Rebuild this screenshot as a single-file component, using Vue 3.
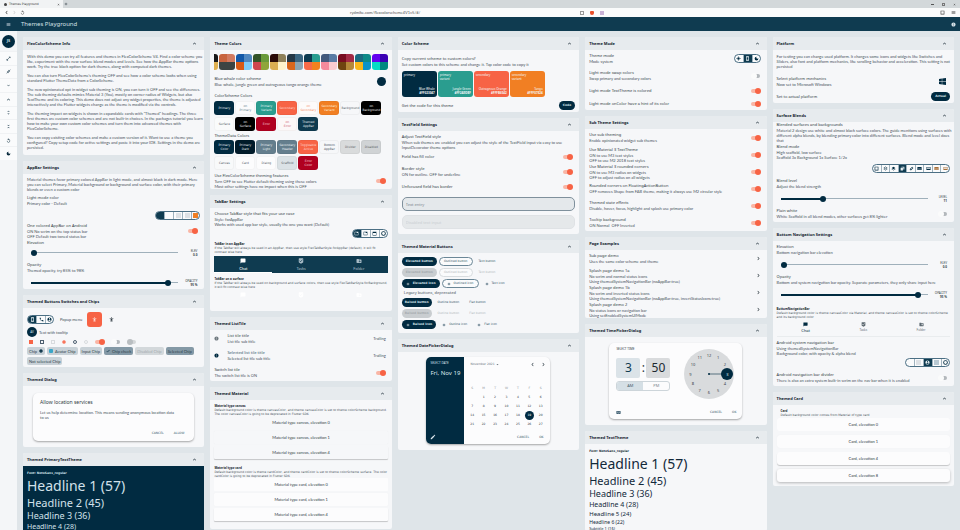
<script setup>
import { h } from 'vue'

const icons = {
  menu: 'M3 18h18v-2H3v2zm0-5h18v-2H3v2zm0-7v2h18V6H3z',
  less: 'M12 7l-8 8 2 2 6-6 6 6 2-2z',
  more: 'M16.59 8.59L12 13.17 7.41 8.59 6 10l6 6 6-6z',
  right: 'M9 4L7 6l6 6-6 6 2 2 8-8z',
  left: 'M15 4l2 2-6 6 6 6-2 2-8-8z',
  down: 'M7 10l5 5 5-5z',
  full: 'M21 11V3h-8l3.29 3.29-10 10L3 13v8h8l-3.29-3.29 10-10z',
  shrink: 'M22 3.41L16.71 8.7 20 12h-8V4l3.29 3.29L20.59 2 22 3.41zM3.41 22l5.29-5.29L12 20v-8H4l3.29 3.29L2 20.59 3.41 22z',
  unfoldMore: 'M12 5.83L15.17 9l1.41-1.41L12 3 7.41 7.59 8.83 9 12 5.83zm0 12.34L8.83 15l-1.41 1.41L12 21l4.59-4.59L15.17 15 12 18.17z',
  unfoldLess: 'M7.41 18.59L8.83 20 12 16.83 15.17 20l1.41-1.41L12 14l-4.59 4.59zm9.18-13.18L15.17 4 12 7.17 8.83 4 7.41 5.41 12 10l4.59-4.59z',
  replay: 'M12 5V1L7 6l5 5V7c3.31 0 6 2.69 6 6s-2.69 6-6 6-6-2.69-6-6H4c0 4.42 3.58 8 8 8s8-3.58 8-8-3.58-8-8-8z',
  moon: 'M12 3a9 9 0 1 0 9 9c0-.46-.04-.92-.1-1.36a5.389 5.389 0 0 1-4.4 2.26 5.403 5.403 0 0 1-3.14-9.8c-.44-.06-.9-.1-1.36-.1z',
  sun: 'M12 6a6 6 0 1 0 0 12 6 6 0 0 0 0-12zM11 1h2v4h-2zM11 19h2v4h-2zM1 11h4v2H1zM19 11h4v2h-4z',
  phoneDevice: 'M17 1H7c-1.100 0-2 .9-2 2v18c0 1.100.9 2 2 2h10c1.100 0 2-.9 2-2V3c0-1.100-.9-2-2-2zm-1 17H8V6h8v12z',
  chat: 'M20 2H4c-1.1 0-2 .9-2 2v18l4-4h14c1.1 0 2-.9 2-2V4c0-1.1-.9-2-2-2z',
  tasks: 'M19 1H5c-1.1 0-1.99.9-1.99 2L3 15.93c0 .69.35 1.3.88 1.66L12 23l8.11-5.41c.53-.36.88-.97.88-1.66L21 3c0-1.1-.9-2-2-2zm-9 15l-5-5 1.41-1.41L10 13.17l7.59-7.59L19 7l-9 9z',
  folder: 'M20 6h-8l-2-2H4c-1.11 0-1.99.89-1.99 2L2 18c0 1.11.89 2 2 2h16c1.11 0 2-.89 2-2V8c0-1.11-.89-2-2-2zm-1 8h-3v3h-2v-3h-3v-2h3V9h2v3h3v2z',
  phone: 'M6.62 10.79c1.44 2.83 3.76 5.14 6.59 6.59l2.2-2.2c.27-.27.67-.36 1.02-.24 1.12.37 2.33.57 3.57.57.55 0 1 .45 1 1V20c0 .55-.45 1-1 1-9.39 0-17-7.61-17-17 0-.55.45-1 1-1h3.5c.55 0 1 .45 1 1 0 1.25.2 2.45.57 3.57.11.35.03.74-.25 1.02l-2.2 2.2z',
  account: 'M12 2C6.48 2 2 6.48 2 12s4.48 10 10 10 10-4.48 10-10S17.52 2 12 2zm0 3c1.66 0 3 1.34 3 3s-1.34 3-3 3-3-1.34-3-3 1.34-3 3-3zm0 14.2c-2.5 0-4.71-1.28-6-3.22.03-1.99 4-3.08 6-3.08 1.99 0 5.97 1.09 6 3.08-1.29 1.94-3.5 3.22-6 3.22z',
  access: 'M12 1c1.400 0 2.500 1.100 2.500 2.500S13.400 6 12 6 9.500 4.900 9.500 3.500 10.600 1 12 1zm9 9h-5v13h-3v-6h-2v6H8V10H3V7h18v3z',
  edit: 'M3 17.25V21h3.75L17.81 9.94l-3.75-3.75L3 17.25zM20.71 7.04c.39-.39.39-1.02 0-1.41l-2.34-2.34c-.39-.39-1.02-.39-1.41 0l-1.83 1.83 3.75 3.75 1.83-1.83z',
  keyboard: 'M20 5H4c-1.1 0-1.99.9-1.99 2L2 17c0 1.1.9 2 2 2h16c1.1 0 2-.9 2-2V7c0-1.1-.9-2-2-2zm-9 3h2v2h-2V8zm0 3h2v2h-2v-2zM8 8h2v2H8V8zm0 3h2v2H8v-2zm-1 2H5v-2h2v2zm0-3H5V8h2v2zm9 7H8v-2h8v2zm0-4h-2v-2h2v2zm0-3h-2V8h2v2zm3 3h-2v-2h2v2zm0-3h-2V8h2v2z',
  info: 'M12 2C6.48 2 2 6.48 2 12s4.48 10 10 10 10-4.48 10-10S17.52 2 12 2zm1 15h-2v-6h2v6zm0-8h-2V7h2v2z',
  windows: 'M0 3.4 9.8 2v9.5H0zM11 1.9 24 0v11.4H11zM0 12.6h9.8V22L0 20.6zM11 12.6h13V24l-13-1.9z',
  add: 'M20 13.500h-6.500V20h-3v-6.500H4v-3h6.500V4h3v6.500H20z',
  check: 'M9 16.17L4.83 12l-2 2L9 20 22 7l-2-2z',
  close: 'M19 6.41L17.59 5 12 10.59 6.41 5 5 6.41 10.59 12 5 17.59 6.41 19 12 13.41 17.59 19 19 17.59 13.41 12z',
  square: 'M3 3h18v18H3zM6 6v12h12V6z',
  ring: 'M12 1a11 11 0 1 0 0 22 11 11 0 0 0 0-22zm0 4a7 7 0 1 1 0 14 7 7 0 0 1 0-14z',
  layers: 'M12 3 3 9l9 6 9-6zM3 13l9 6 9-6v3l-9 6-9-6z',
  layersOut: 'M12 2 2 9l10 7 10-7zm0 3 6 4-6 4-6-4zM2 14l10 7 10-7h-3l-7 5-7-5z',
  stack: 'M3 8h11v13H3zM7 3h14v14h-5V6H7z',
  pill: 'M15 3l6 6L9 21l-6-6zm0 4-8 8 2 2 8-8z',
  bar: 'M2 5h20v14H2zM5 13v3h14v-3z',
  barBottom: 'M2 5h20v14H2zM4 7v6h16V7z',
  corner: 'M3 4h18v16H3zM5 10v8h14v-8h-6V6H5z',
  topbar: 'M3 3h18v18H3zM5 9v10h14V9z',
}
const Icon = (p) => h('svg', { viewBox: '0 0 24 24', 'aria-hidden': 'true' }, [h('path', { d: icons[p.name], fill: 'currentColor', 'fill-rule': 'evenodd' })])
Icon.props = ['name']

const rail = ['full', 'shrink', 'more', 'less', 'unfoldMore', 'unfoldLess', 'replay', 'moon']

const schemes = [
  ['#181818', '#181818', '#e0b050', '#e0b050'], ['#c8643f', '#d27a60', '#3c4443', '#3c4443'], ['#1358a8', '#5087c0', '#d95a16', '#7fcbf8'],
  ['#345429', '#6a9a3a', '#cf4550', '#8fa53a'], ['#2c0c08', '#90815a', '#dcae52', '#fff3cc'], ['#253846', '#3a6580', '#d8661c', '#8ba4b2'],
  ['#0d3a50', '#2a9d8f', '#f76a48', '#f3821f'], ['#43597c', '#5a7ba4', '#f48a9c', '#fbcbd0'], ['#780d20', '#a32a45', '#6f4410', '#b5883a'],
  ['#1c6a80', '#108a88', '#f8b71a', '#0c93c8'], ['#6200ee', '#3a00b3', '#06dac5', '#01887f'],
]
const schemeColors = [
  ['Primary', '#012b41', '#e6edf2'], ['on\nPrimary', '#fbfbfc', '#5d7c8c'], ['Primary\nVariant', '#2a9d8f', '#e6f6f4'], ['Secondary', '#f76345', '#ffd5cb'],
  ['on\nSecondary', '#fdfbfa', '#f4906f'], ['Secondary\nVariant', '#f17f23', '#fff0dc'], ['Background', '#f6f7f9', '#566069'], ['on\nBackground', '#000', '#eee'],
  ['Surface', '#fafbfb', '#566069'], ['on\nSurface', '#000', '#eee'], ['Error', '#b00020', '#f4d3d8'], ['on\nError', '#fcf8f8', '#cf6474'], ['Themed\nAppBar', '#0f3b50', '#e6edf2'],
]
const dataColors = [
  ['Primary\nColor', '#012b41', '#e6edf2'], ['Primary\nDark', '#011b2a', '#e6edf2'], ['Primary\nLight', '#647e8d', '#edf2f4'], ['Secondary\nHeader', '#647e8d', '#edf2f4'],
  ['Toggleable\nActive', '#f76345', '#ffd5cb'], ['Bottom\nAppBar', '#f6f7f9', '#46525c'], ['Divider', '#d9dbdc', '#5c6468'], ['Disabled', '#d0d3d5', '#5c6468'],
  ['Canvas', '#f8f9fa', '#566069'], ['Card', '#fcfcfd', '#566069'], ['Dialog', '#fcfcfd', '#566069'], ['Scaffold', '#dbe2e6', '#566069'], ['Error\nColor', '#b00020', '#f4d3d8'],
]
const custom = [
  ['primary', 'Blue Whale', '#FF023047', '#012b41'], ['primary\nvariant', 'Jungle Green', '#FF2A9D8F', '#2a9d8f'],
  ['secondary', 'Outrageous Orange', '#FFFB6542', '#f76345'], ['secondary\nvariant', 'Tango', '#FFF07E24', '#f17f23'],
]
const fieldRows = [['Field has fill color', ''], ['Border style', 'ON for outline. OFF for underline'], ['Unfocused field has border', '']]
const modeRows = [['Light mode swap colors', 'Swap primary and secondary colors', false], ['Light mode TextTheme is colored', '', true], ['Light mode onColor have a hint of its color', '', true]]
const subRows = [
  ['Use sub theming', 'Enable opinionated widget sub themes'], ['Use Material 3 TextTheme', 'ON to use M3 text styles\nOFF to use M2 2018 text styles'],
  ['Use Material 3 rounded corners', 'ON to use M3 radius on widgets\nOFF to adjust radius on all widgets'],
  ['Rounded corners on FloatingActionButton', 'OFF removes Shape from FAB theme, making it always use M2 circular style'],
  ['Themed state effects', 'Disable, hover, focus, highlight and splash use primary color'], ['Tooltip background', 'ON Normal  OFF Inverted'],
]
const pages = [
  ['Sub page demo', 'Uses the same color scheme and theme'], ['Splash page demo 1a', 'No scrim and normal status icons\nUsing themedSystemNavigationBar (noAppBar:true)'],
  ['Splash page demo 1b', 'No scrim and inverted status icons\nUsing themedSystemNavigationBar (noAppBar:true, invertStatusIcons:true)'],
  ['Splash page demo 2', 'No status icons or navigation bar\nUsing setEnabledSystemUIMode'],
]
const heads = ['Headline 1 (57)', 'Headline 2 (45)', 'Headline 3 (36)', 'Headline 4 (28)', 'Headline 5 (24)', 'Headline 6 (22)', 'Subtitle 1 (16)']
const tabs = [['chat', 'Chat'], ['tasks', 'Tasks'], ['folder', 'Folder']]
const blends = ['square', 'layersOut', 'layers', 'stack', 'pill', 'bar', 'barBottom', 'bar', 'barBottom']
const days = [null, ...Array.from({ length: 27 }, (_, i) => i + 1)]
const hours = Array.from({ length: 12 }, (_, i) => {
  const a = ((i + 1) * Math.PI) / 6
  return { n: i + 1, x: 25 + 18.5 * Math.sin(a), y: 25 - 18.5 * Math.cos(a) }
})
</script>

<template>
  <div class="window">
    <div class="tabstrip">
      <div class="tab"><i class="fav"></i><span>Themes Playground</span><Icon name="close" /></div>
      <button class="newtab" aria-label="New tab"><Icon name="add" /></button>
      <span class="grow"></span>
      <span class="winctl"><i class="min"></i><i class="max"></i><Icon name="close" /></span>
    </div>
    <div class="toolbar">
      <Icon name="left" /><Icon class="dim" name="right" /><Icon name="replay" />
      <span class="address">rydmike.com/flexcolorscheme4V1v5/#/</span>
      <span class="ext"><i class="e1"></i><i class="e2"></i><i class="e3"></i></span>
      <span class="right-tools"><Icon name="square" /><Icon name="menu" /></span>
    </div>
    <header class="appbar">
      <button aria-label="Menu"><Icon name="menu" /></button>
      <h1>Themes Playground</h1>
      <button aria-label="About"><Icon name="info" /></button>
    </header>

    <div class="shell">
      <aside class="rail">
        <div class="avatar-wrap"><span class="logo">JS</span></div>
        <nav><button v-for="r in rail" :key="r" :aria-label="r"><Icon :name="r" /></button></nav>
      </aside>

      <main>
        <div class="col">
          <section class="card">
            <h2><button>FlexColorScheme Info<Icon name="less" /></button></h2>
            <div class="body prose">
              <p>With this demo you can try all features and themes in FlexColorScheme V4. Find a color scheme you<br>like, experiment with the new surface blend modes and levels. See how the AppBar theme options<br>work. Try the true black option for dark themes, along with computed dark themes.</p>
              <p>You can also turn FlexColorScheme's theming OFF and see how a color scheme looks when using<br>standard Flutter ThemeData from a ColorScheme.</p>
              <p>The new opinionated opt in widget sub theming is ON, you can turn it OFF and see the differences.<br>The sub theming defaults mimics Material 3 (You), mostly on corner radius of Widgets, but also<br>TextTheme and its coloring. This demo does not adjust any widget properties, the theme is adjusted<br>interactively and the Flutter  widgets change as the theme is modified via the controls.</p>
              <p>The theming impact on widgets is shown in expandable cards with "Themed" headings. The three<br>first themes are custom color schemes and are not built-in choices. In the packages tutorial you learn<br>how to make your own custom color schemes and turn them into advanced themes with<br>FlexColorScheme.</p>
              <p>You can copy existing color schemes and make a custom version of it. Want to use a theme you<br>configured? Copy setup code for active settings and paste it into your IDE. Settings in the demo are<br>persisted.</p>
            </div>
          </section>

          <section class="card">
            <h2><button>AppBar Settings<Icon name="less" /></button></h2>
            <div class="body">
              <p class="sub lead">Material themes favor primary colored AppBar in light mode, and almost black in dark mode. Here<br>you can select Primary, Material background or background and surface color, with their primary<br>blends or even a custom color</p>
              <div class="row"><div><b>Light mode color</b><p>Primary color - Default</p></div></div>
              <div class="segrow"><div class="seg"><button class="on" aria-label="Primary"></button><button aria-label="Material"></button><button class="s1" aria-label="Background"><i></i></button><button class="s1" aria-label="Surface"><i></i></button><button class="s2" aria-label="Custom"><i></i></button></div></div>
              <label class="row"><div><b>One colored AppBar on Android</b><p>ON  No scrim on the top status bar<br>OFF Default two toned status bar</p></div><input type="checkbox" class="switch" checked></label>
              <label class="solo" for="ab-el">Elevation</label>
              <div class="slider"><input id="ab-el" type="range" value="0" style="--v:0%"><output>ELEV<b>0.0</b></output></div>
              <label class="row" for="ab-op"><div><b>Opacity</b><p>Themed opacity, try 85% to 98%</p></div></label>
              <div class="slider"><input id="ab-op" type="range" value="95" style="--v:95%"><output>OPACITY<b>95 %</b></output></div>
            </div>
          </section>

          <section class="card">
            <h2><button>Themed Buttons Switches and Chips<Icon name="less" /></button></h2>
            <div class="body widgets">
              <div class="line l1"><div class="seg"><button class="on" aria-label="Device"><Icon name="phoneDevice" /></button><button aria-label="Phone"><Icon name="phone" /></button><button aria-label="Account"><Icon name="account" /></button></div><span class="sub popup">Popup menu</span><button class="fab" aria-label="Accessibility"><Icon name="access" /></button><Icon class="acc" name="access" /></div>
              <div class="line l2"><span class="av">AV</span><span class="sub">Text with tooltip</span></div>
              <div class="line l3">
                <input type="checkbox" class="cb" checked aria-label="Checked"><input type="checkbox" class="cb" aria-label="Unchecked"><input type="checkbox" class="cb" disabled aria-label="Disabled">
                <input type="radio" name="r" class="rb" checked aria-label="Selected"><input type="radio" name="r" class="rb" aria-label="Unselected"><input type="radio" class="rb" disabled aria-label="Disabled">
                <span class="switches"><input type="checkbox" class="switch" checked aria-label="On"><input type="checkbox" class="switch" aria-label="Off"><input type="checkbox" class="switch" disabled aria-label="Disabled"></span>
              </div>
              <div class="chips"><span>Chip<Icon name="info" /></span><span><i class="mini"></i>Avatar Chip</span><span>Input Chip</span><span class="sel"><Icon name="check" />Chip check</span><span class="dis">Disabled Chip</span><span class="sel">Selected Chip</span><span>Not selected Chip</span></div>
            </div>
          </section>

          <section class="card">
            <h2><button>Themed Dialog<Icon name="less" /></button></h2>
            <div class="body dialog-body">
              <div class="dialog"><h3>Allow location services</h3><p class="sub">Let us help determine location. This means sending anonymous location data<br>to us</p><div class="actions"><button>CANCEL</button><button>ALLOW</button></div></div>
            </div>
          </section>

          <section class="card">
            <h2><button>Themed PrimaryTextTheme<Icon name="less" /></button></h2>
            <div class="body type dark"><b>Font: NotoSans_regular</b><p v-for="(t, i) in heads.slice(0, 4)" :key="t" :class="'h' + (i + 1)">{{ t }}</p></div>
          </section>
        </div>

        <div class="col">
          <section class="card">
            <h2><button>Theme Colors<Icon name="less" /></button></h2>
            <div class="body colors">
              <div class="schemes"><button v-for="(s, i) in schemes" :key="i" :aria-label="'Scheme ' + (i + 1)"><i v-for="(c, j) in s" :key="j" :style="{ background: c }"></i></button></div>
              <div class="row"><div><b>Blue whale color scheme</b><p>Blue whale, jungle green and outrageous tango orange theme</p></div><i class="dot"></i></div>
              <h4>ColorScheme Colors</h4>
              <div class="boxes"><span v-for="c in schemeColors" :key="c[0]" :style="{ background: c[1], color: c[2] }">{{ c[0] }}</span></div>
              <h4>ThemeData Colors</h4>
              <div class="boxes"><span v-for="c in dataColors" :key="c[0]" :style="{ background: c[1], color: c[2] }">{{ c[0] }}</span></div>
              <label class="row"><div><b>Use FlexColorScheme theming features</b><p>Turn OFF to see Flutter default theming using these colors<br>Most other settings have no impact when this is OFF</p></div><input type="checkbox" class="switch" checked></label>
            </div>
          </section>

          <section class="card">
            <h2><button>TabBar Settings<Icon name="less" /></button></h2>
            <div class="body tabcard">
              <div class="row"><div><b>Choose TabBar style that fits your use case</b><p>Style: forAppBar<br>Works with used app bar style, usually the one you want (Default)</p></div></div>
              <div class="segrow"><div class="seg"><button class="on" aria-label="App bar"><Icon name="corner" /></button><button aria-label="Background"><Icon name="corner" /></button><button aria-label="Top"><Icon name="topbar" /></button><button aria-label="Universal"><Icon name="ring" /></button></div></div>
              <div class="note"><b>TabBar in an AppBar</b><p>If the TabBar will always be used in an AppBar, then use style FlexTabBarStyle.forAppBar (default), it will fit<br>contrast wise here</p></div>
              <div class="tabbar"><button v-for="t in tabs" :key="t[1]"><Icon :name="t[0]" />{{ t[1] }}</button></div>
              <div class="note"><b>TabBar on a surface</b><p>If the TabBar will always be used on background and surface colors, then use style FlexTabBarStyle.forBackground,<br>it will fit contrast wise here</p></div>
              <div class="tabbar ghost"><button v-for="t in tabs" :key="t[1]" :aria-label="t[1]"><Icon :name="t[0]" /></button></div>
            </div>
          </section>

          <section class="card">
            <h2><button>Themed ListTile<Icon name="less" /></button></h2>
            <div class="body tiles">
              <div class="row"><Icon class="gray" name="info" /><div><b>List tile title</b><p>List tile sub title</p></div><span class="sub">Trailing</span></div>
              <div class="row picked"><Icon name="info" /><div><b>Selected list tile title</b><p>Selected list tile sub title</p></div><span class="sub">Trailing</span></div>
              <label class="row"><div><b>Switch list tile</b><p>The switch list tile is ON</p></div><input type="checkbox" class="switch" checked></label>
            </div>
          </section>

          <section class="card">
            <h2><button>Themed Material<Icon name="less" /></button></h2>
            <div class="body material">
              <div class="note"><b>Material type canvas</b><p>Default background color is theme canvasColor, and theme canvasColor is set to theme colorScheme background.<br>The color canvasColor is going to be deprecated in Flutter SDK</p></div>
              <div class="sheets"><span>Material type canvas, elevation 0</span><span class="z1">Material type canvas, elevation 1</span><span class="z4">Material type canvas, elevation 4</span></div>
              <div class="note"><b>Material type card</b><p>Default background color is theme cardColor, and theme cardColor is set to theme colorScheme surface. The color<br>cardColor is going to be deprecated in Flutter SDK</p></div>
              <div class="sheets white"><span>Material type card, elevation 0</span><span class="z1">Material type card, elevation 1</span><span class="z4">Material type card, elevation 4</span></div>
            </div>
          </section>
        </div>

        <div class="col">
          <section class="card">
            <h2><button>Color Scheme<Icon name="less" /></button></h2>
            <div class="body scheme">
              <div class="row"><div><b>Copy current scheme to custom colors?</b><p>Set custom colors to this scheme and change it. Tap color code to copy it</p></div></div>
              <div class="customs"><button v-for="c in custom" :key="c[0]" :style="{ background: c[3] }"><span>{{ c[0] }}</span><span class="code">{{ c[1] }}<b>{{ c[2] }}</b></span></button></div>
              <div class="row single"><div><b>Get the code for this theme</b></div><button class="btn fill">Code</button></div>
            </div>
          </section>

          <section class="card">
            <h2><button>TextField Settings<Icon name="less" /></button></h2>
            <div class="body fields">
              <div class="intro"><b>Adjust TextField style</b><p>When sub themes are enabled you can adjust the style of the TextField input via easy to use<br>InputDecorator theme options</p></div>
              <label v-for="r in fieldRows" :key="r[0]" class="row" :class="{ single: !r[1] }"><div><b>{{ r[0] }}</b><p v-if="r[1]">{{ r[1] }}</p></div><input type="checkbox" class="switch" checked></label>
              <input class="text" placeholder="Text entry" aria-label="Text entry">
              <input class="text" placeholder="Disabled text input" aria-label="Disabled text input" disabled>
            </div>
          </section>

          <section class="card">
            <h2><button>Themed Material Buttons<Icon name="less" /></button></h2>
            <div class="body btns">
              <div><button class="btn fill">Elevated button</button><button class="btn out">Outlined button</button><button class="btn">Text button</button></div>
              <div><button class="btn fill" disabled>Elevated button</button><button class="btn out" disabled>Outlined button</button><button class="btn" disabled>Text button</button></div>
              <div><button class="btn fill"><Icon name="add" />Elevated icon</button><button class="btn out"><Icon name="add" />Outlined icon</button><button class="btn"><Icon name="add" />Text icon</button></div>
              <p>Legacy buttons, deprecated</p>
              <div><button class="btn fill tight">Raised button</button><button class="btn">Outline button</button><button class="btn">Flat button</button></div>
              <div><button class="btn fill tight" disabled>Raised button</button><button class="btn" disabled>Outline button</button><button class="btn" disabled>Flat button</button></div>
              <div><button class="btn fill"><Icon name="add" />Raised icon</button><button class="btn"><Icon name="add" />Outline icon</button><button class="btn"><Icon name="add" />Flat icon</button></div>
            </div>
          </section>

          <section class="card">
            <h2><button>Themed DatePickerDialog<Icon name="less" /></button></h2>
            <div class="body pick">
              <div class="datepicker">
                <div class="side"><span>SELECT DATE</span><strong>Fri, Nov 19</strong><Icon name="edit" /></div>
                <div class="cal">
                  <div class="calhead"><span>November 2021</span><Icon name="down" /><i class="grow"></i><button aria-label="Previous month"><Icon name="left" /></button><button aria-label="Next month"><Icon name="right" /></button></div>
                  <div class="grid"><span v-for="(d, i) in 'SMTWTFS'" :key="'w' + i" class="wd">{{ d }}</span><span v-for="(d, i) in days" :key="i" :class="{ today: d === 19 }">{{ d }}</span></div>
                  <div class="actions"><button>CANCEL</button><button>OK</button></div>
                </div>
              </div>
            </div>
          </section>
        </div>

        <div class="col">
          <section class="card">
            <h2><button>Theme Mode<Icon name="less" /></button></h2>
            <div class="body">
              <div class="row"><div><b>Theme mode</b><p>Mode system</p></div><div class="seg"><button aria-label="Light"><Icon name="sun" /></button><button class="on" aria-label="System"><Icon name="phoneDevice" /></button><button aria-label="Dark"><Icon name="moon" /></button></div></div>
              <label v-for="r in modeRows" :key="r[0]" class="row" :class="{ single: !r[1] }"><div><b>{{ r[0] }}</b><p v-if="r[1]">{{ r[1] }}</p></div><input type="checkbox" class="switch" :checked="r[2]"></label>
            </div>
          </section>

          <section class="card">
            <h2><button>Sub Theme Settings<Icon name="less" /></button></h2>
            <div class="body"><label v-for="r in subRows" :key="r[0]" class="row"><div><b>{{ r[0] }}</b><p>{{ r[1] }}</p></div><input type="checkbox" class="switch" checked></label></div>
          </section>

          <section class="card">
            <h2><button>Page Examples<Icon name="less" /></button></h2>
            <div class="body"><a v-for="r in pages" :key="r[0]" href="#" class="row"><div><b>{{ r[0] }}</b><p>{{ r[1] }}</p></div><Icon class="go" name="right" /></a></div>
          </section>

          <section class="card">
            <h2><button>Themed TimePickerDialog<Icon name="less" /></button></h2>
            <div class="body pick time">
              <div class="timepicker">
                <span class="cap">SELECT TIME</span>
                <div class="timemain">
                  <div class="digits">
                    <div class="hm"><span class="cur">3</span><i>:</i><span>50</span></div>
                    <div class="ampm"><button class="cur">AM</button><button>PM</button></div>
                  </div>
                  <svg class="clock" viewBox="0 0 50 50"><circle cx="25" cy="25" r="25" fill="#d9dbdd" /><path d="M25 25H43" stroke="#012b41" stroke-width=".6" /><circle cx="25" cy="25" r="1" fill="#012b41" /><circle cx="43" cy="25" r="6" fill="#012b41" /><text v-for="t in hours" :key="t.n" :x="t.x" :y="t.y + 1.5" :fill="t.n === 3 ? '#dfe8ee' : '#3a444c'" text-anchor="middle" font-size="4">{{ t.n }}</text></svg>
                </div>
                <div class="actions"><Icon name="keyboard" /><i class="grow"></i><button>CANCEL</button><button>OK</button></div>
              </div>
            </div>
          </section>

          <section class="card">
            <h2><button>Themed TextTheme<Icon name="less" /></button></h2>
            <div class="body type"><b>Font: NotoSans_regular</b><p v-for="(t, i) in heads" :key="t" :class="'h' + (i + 1)">{{ t }}</p></div>
          </section>
        </div>

        <div class="col">
          <section class="card">
            <h2><button>Platform<Icon name="less" /></button></h2>
            <div class="body platform">
              <p class="sub">For testing you can change used platform. It changes some icons and widgets like Switches and<br>Sliders, also font and platform mechanics, like scrolling behavior and acceleration. This setting is not<br>persisted</p>
              <div class="row"><div><b>Select platform mechanics</b><p>Now set to Microsoft Windows</p></div><Icon class="win" name="windows" /></div>
              <div class="row single"><div><b>Set to actual platform</b></div><button class="btn fill">Actual</button></div>
            </div>
          </section>

          <section class="card">
            <h2><button>Surface Blends<Icon name="less" /></button></h2>
            <div class="body blend">
              <b>Blended surfaces and backgrounds</b>
              <p class="sub">Material 2 design use white and almost black surface colors. The guide mentions using surfaces with<br>different alpha blends, by blending primary color into different surfaces. Blend mode and level does<br>that</p>
              <div class="row"><div><b>Blend mode</b><p>High scaffold, low surface<br>Scaffold 3x  Background 1x  Surface 1/2x</p></div></div>
              <div class="segrow"><div class="seg many"><button v-for="(b, i) in blends" :key="i" :class="{ on: i === 3, warm: i > 6 }" :aria-label="'Blend ' + (i + 1)"><Icon :name="b" /></button></div></div>
              <label class="row" for="bl"><div><b>Blend level</b><p>Adjust the blend strength</p></div></label>
              <div class="slider"><input id="bl" type="range" value="28" style="--v:28%"><output>LEVEL<b>11</b></output></div>
              <label class="row"><div><b>Plain white</b><p>White Scaffold in all blend modes, other surfaces get 8% lighter</p></div><input type="checkbox" class="switch"></label>
            </div>
          </section>

          <section class="card">
            <h2><button>Bottom Navigation Settings<Icon name="less" /></button></h2>
            <div class="body bottomnav">
              <label class="row" for="bn-el"><div><b>Elevation</b><p>Bottom navigation bar elevation</p></div></label>
              <div class="slider"><input id="bn-el" type="range" value="0" style="--v:0%"><output>ELEV<b>0.0</b></output></div>
              <label class="row" for="bn-op"><div><b>Opacity</b><p>Bottom and system navigation bar opacity. Separate parameters, they only share input here</p></div></label>
              <div class="slider"><input id="bn-op" type="range" value="95" style="--v:95%"><output>OPACITY<b>95 %</b></output></div>
              <div class="note"><b>BottomNavigationBar</b><p>Default background color is theme canvasColor via Material, and theme canvasColor is set to theme colorScheme<br>and its background color</p></div>
              <nav class="bnav"><button v-for="(t, i) in tabs" :key="t[1]" :class="{ cur: !i }"><Icon :name="t[0]" />{{ t[1] }}</button></nav>
              <div class="row"><div><b>Android system navigation bar</b><p>Using themedSystemNavigationBar<br>Background color, with opacity &amp; alpha blend</p></div></div>
              <div class="segrow"><div class="seg"><button aria-label="None"></button><button class="s1" aria-label="Surface"><i></i></button><button class="on" aria-label="Background"><Icon name="account" /></button><button class="s3" aria-label="Scaffold"><i></i></button><button aria-label="Transparent"><Icon name="ring" /></button></div></div>
              <label class="row"><div><b>Android navigation bar divider</b><p>There is also an extra system built-in scrim on the nav bar when it is enabled</p></div><input type="checkbox" class="switch"></label>
            </div>
          </section>

          <section class="card">
            <h2><button>Themed Card<Icon name="less" /></button></h2>
            <div class="body cards"><div class="note"><b>Card</b><p>Default background color comes from Material of type card</p></div><div class="sheets white"><span>Card, elevation 0</span><span class="z1">Card, elevation 1</span><span class="z4">Card, elevation 4</span><span class="z8">Card, elevation 8</span></div></div>
          </section>
        </div>
      </main>
    </div>
  </div>
</template>

<style>
body { margin: 0; overflow: hidden; }
</style>

<style scoped>
.window { --navy: #012b41; --small: 3px; --title: 4px; height: 100vh; display: flex; flex-direction: column; overflow: hidden; font: 4px/6px "Noto Sans", sans-serif; color: #2f3a42; background: #dfe5e9; }
.window * { box-sizing: border-box; }
h1, h2, h3, h4, p { margin: 0; font: inherit; }
button { font: inherit; color: inherit; background: none; border: 0; padding: 0; margin: 0; white-space: nowrap; }
a { color: inherit; text-decoration: none; }
b { font-weight: inherit; }
input { margin: 0; }
svg { width: 5px; height: 5px; display: block; flex: none; }
.grow { flex: 1; }

.tabstrip { height: 8px; flex: none; display: flex; align-items: center; background: #d3d8da; }
.tab { width: 63px; height: 8px; display: flex; align-items: center; gap: 2px; padding: 0 3px 0 4px; background: #f1f3f4; color: #333; }
.tab span { flex: 1; font: 3px/6px "DejaVu Sans", sans-serif; }
.tab svg { width: 3px; height: 3px; }
.fav { width: 3px; height: 3px; border-radius: 50%; background: #444; }
.newtab { margin-left: 1px; }
.newtab svg { width: 4px; height: 4px; }
.winctl { display: flex; align-items: center; gap: 8px; padding-right: 4px; color: #333; }
.winctl svg { width: 3px; height: 3px; }
.min { width: 3px; height: 1px; background: #555; }
.max { width: 3px; height: 3px; border: 1px solid #777; }
.toolbar { height: 9px; flex: none; display: flex; align-items: center; gap: 3px; padding: 0 4px; background: #fafbfb; color: #444; }
.toolbar .dim { opacity: .25; }
.address { margin-left: 322px; font: 4px/6px Lato, sans-serif; flex: 1; color: #555; }
.ext { display: flex; gap: 6px; align-items: center; margin-right: 333px; }
.ext i { width: 4px; height: 4px; }
.e1 { border: 1px solid #999; }
.e2 { background: #e8502b; border-radius: 1px 1px 2px 2px; }
.e3 { background: #c9b2d6; }
.right-tools { display: flex; gap: 6px; }
.appbar { height: 14px; flex: none; display: flex; align-items: center; background: #0f3b50; color: #d5e0e6; padding: 0 4px 0 6px; }
.appbar h1 { flex: 1; margin-left: 10px; font-size: 6px; line-height: 14px; }

.shell { flex: 1; min-height: 0; display: flex; }
.rail { width: 17px; flex: none; background: #f4f6f8; color: #0b2c3f; }
.avatar-wrap { height: 20px; display: grid; place-items: center; }
.logo { width: 13px; height: 13px; border-radius: 50%; background: var(--navy); color: #cfe0ea; display: grid; place-items: center; font-weight: bold; }
.rail nav { height: 109px; display: flex; flex-direction: column; background: #fafbfc; }
.rail nav button { flex: 1; display: grid; place-items: center; border-top: 1px solid #f0f2f4; }
main { flex: 1; min-width: 0; display: grid; grid-template-columns: repeat(5, minmax(0, 1fr)); gap: 6px; padding: 6px; overflow: hidden; align-items: start; }
.col { display: flex; flex-direction: column; gap: 6px; }
.card { background: #f6f7f9; border-radius: 2px; overflow: hidden; }
.card h2 button { width: 100%; height: 13px; display: flex; align-items: center; justify-content: space-between; padding: 0 7px 0 4px; background: #e7ebee; color: #14242f; font-size: var(--title); font-weight: bold; }
.body { padding: 0 4px; }
.body p, .sub { font: 4px/5px Lato, "Noto Sans", sans-serif; white-space: pre; color: #46525b; }
.row { min-height: 17px; display: flex; align-items: center; justify-content: space-between; padding-right: 2px; }
.row.single { min-height: 13px; }
.row b, .intro b, .blend > b { display: block; line-height: 6px; white-space: nowrap; }
.row > div { min-width: 0; }
.prose { padding: 4px 4px 5px; display: grid; gap: 4px; }
.lead { padding-top: 3px; }
.solo { display: block; line-height: 7px; }

.switch { appearance: none; flex: none; width: 10px; height: 6px; position: relative; }
.switch::before { content: ""; position: absolute; right: 1px; top: 1px; width: 7px; height: 4px; border-radius: 2px; background: #b3b8bc; }
.switch::after { content: ""; position: absolute; left: 0; top: 0; width: 6px; height: 6px; border-radius: 50%; background: #fafbfb; }
.switch:checked::before { right: 2px; width: 8px; background: #f9b6a6; }
.switch:checked::after { left: 4px; background: #f76345; }
.switch:disabled::before { background: #d4d7d9; }
.switch:disabled::after { background: #b9bec1; }
.segrow { height: 13px; display: flex; align-items: center; justify-content: flex-end; }
.seg { display: flex; height: 9px; border: 1px solid #4b6f84; border-radius: 5px; overflow: hidden; background: #fafbfc; color: var(--navy); }
.seg button { width: 9px; display: grid; place-items: center; }
.seg button:first-child, .seg button:last-child { width: 8px; }
.seg button + button { border-left: 1px solid #9fb2be; }
.seg .on { background: #0f3b50; color: #e8f0f4; }
.seg svg { width: 5px; height: 5px; }
.seg i { width: 5px; height: 5px; background: #dde1e5; }
.seg .s2 i { background: #f17f23; }
.seg .s3 i { background: #b8c8d2; }
.seg.many { width: 78px; }
.seg.many button { flex: 1; }
.warm { color: #a8703a; }
.slider { height: 13px; display: flex; align-items: center; gap: 3px; padding: 0 3px 0 4px; }
.slider input { appearance: none; flex: 1; min-width: 0; height: 6px; background: linear-gradient(var(--navy), var(--navy)) 0 50% / var(--v) 2px no-repeat, linear-gradient(#9fb0bb, #9fb0bb) 0 50% / 100% 1px no-repeat; }
.slider input::-webkit-slider-thumb { appearance: none; width: 6px; height: 6px; border-radius: 50%; background: var(--navy); }
.slider output { width: 16px; text-align: right; font-size: var(--small); line-height: 4px; }
.slider output b { display: block; font-weight: bold; }

.widgets { padding: 4px 4px 2px; }
.line { display: flex; align-items: center; }
.l1 { height: 15px; }
.popup { margin: 0 5px 0 6px; }
.fab { width: 15px; height: 15px; border-radius: 3px; background: #f76345; color: #ffe4dc; display: grid; place-items: center; }
.acc { margin-left: 7px; }
.l2 { height: 10px; gap: 2px; }
.av { width: 10px; height: 10px; border-radius: 50%; background: var(--navy); color: #cfe0ea; font-size: var(--small); display: grid; place-items: center; }
.l3 { height: 9px; gap: 7px; padding-left: 2px; }
.cb, .rb { appearance: none; width: 4px; height: 4px; border: 1px solid #4e5f70; }
.cb:checked { background: #f76345; border-color: #f76345; }
.rb { border-radius: 50%; }
.rb:checked { background: #f76345; border-color: #f9a090; }
.cb:disabled, .rb:disabled { border-color: #d8dbde; }
.switches { display: flex; gap: 6px; }
.chips { padding-top: 1px; display: flex; flex-wrap: wrap; gap: 2px; }
.chips span { height: 8px; display: flex; align-items: center; gap: 2px; padding: 0 2px; border-radius: 2px; background: #c8d1d7; color: #2d3e49; font: 4px Lato, sans-serif; white-space: nowrap; }
.chips .sel { background: #8499a6; }
.chips .dis { background: #d3d8db; color: #a3abb0; }
.chips svg { width: 4px; height: 4px; color: var(--navy); }
.mini { width: 4px; height: 4px; background: #3aa6c8; border-radius: 1px; }

.dialog-body { padding: 7px 10px 6px; }
.dialog { background: #fcfcfd; border-radius: 5px; box-shadow: 0 1px 2px #0005; padding: 6px 7px 3px; height: 48px; display: flex; flex-direction: column; }
.dialog h3 { font-size: 5px; margin-bottom: 5px; }
.actions { display: flex; align-items: center; justify-content: flex-end; gap: 10px; margin-top: auto; font: 3px/5px "DejaVu Sans", sans-serif; height: 9px; color: #34566a; }
.dialog .actions { padding-right: 3px; }

.type { color: #13293a; padding: 4px 4px 0; }
.type b { display: block; font: bold 3px/6px "DejaVu Sans", sans-serif; }
.type p { font-family: "Noto Sans", sans-serif; color: inherit; }
.type .h1 { font-size: 14px; line-height: 19px; }
.type .h2 { font-size: 11px; line-height: 15px; }
.type .h3 { font-size: 9px; line-height: 12px; }
.type .h4 { font-size: 7px; line-height: 10px; }
.type .h5 { font-size: 6px; line-height: 8px; }
.type .h6 { font-size: 5px; line-height: 8px; }
.type .h7 { font-size: 4px; line-height: 5px; }
.dark { background: var(--navy); color: #d2e1ea; }

.colors { padding-top: 4px; }
.schemes { display: flex; justify-content: flex-end; gap: 1px; overflow: hidden; margin-bottom: 3px; }
.schemes button { flex: none; width: 16px; height: 16px; display: grid; grid-template-columns: 1fr 1fr; border-radius: 3px; overflow: hidden; }
.dot { width: 9px; height: 9px; border-radius: 50%; background: var(--navy); }
.colors h4 { padding: 3px 0 2px; line-height: 6px; }
.boxes { display: flex; flex-wrap: wrap; gap: 2px 1px; }
.colors .boxes + h4 { padding: 2px 0 1px; }
.boxes span { width: 20px; height: 14px; border-radius: 3px; display: grid; place-items: center; text-align: center; white-space: pre; font: 3px/4px "DejaVu Sans", sans-serif; box-shadow: inset 0 0 0 1px #00000009; }
.boxes + .row { margin-top: 2px; }

.tabcard { padding-top: 2px; padding-bottom: 3px; }
.note { padding-top: 2px; }
.note b, .note p { display: block; font: 3px/4px "DejaVu Sans", sans-serif; white-space: pre; }
.note b { font-family: "Noto Sans", sans-serif; font-weight: bold; color: #16242e; }
.tabbar { display: grid; grid-template-columns: repeat(3, 1fr); height: 17px; margin: 2px 0; background: #0f3b50; color: #a9bcc7; font: 4px/5px Lato, sans-serif; }
.tabbar button { display: flex; flex-direction: column; align-items: center; gap: 2px; padding-top: 2px; border-bottom: 1px solid transparent; }
.tabbar svg { width: 6px; height: 6px; }
.tabbar:not(.ghost) button:first-child { color: #fff; border-color: #fff; }
.ghost { background: none; color: #fff; margin: 1px 0; }

.tiles .row svg { margin: 0 8px 0 0; }
.tiles .row > svg + div { flex: 1; }
.tiles svg { color: var(--navy); }
.tiles .gray { color: #707a80; }
.picked { color: #34566a; }
.material { padding-top: 2px; padding-bottom: 8px; }
.sheets { display: grid; gap: 2px; }
.sheets + .note { padding-top: 7px; }
.sheets span { height: 13px; display: grid; place-items: center; border-radius: 1px; font: 4px/5px Lato, sans-serif; background: #f6f7f9; }
.white span { background: #fcfcfd; }
.sheets .z1 { box-shadow: 0 0 1px #0001; }
.sheets .z4 { box-shadow: 0 1px 1px #0003; }
.sheets .z8 { box-shadow: 0 1px 3px #0004; }

.scheme { padding-top: 3px; }
.customs { display: flex; gap: 1px; padding: 1px 0 2px; }
.customs button { width: 35px; height: 26px; border-radius: 3px; padding: 2px; display: flex; flex-direction: column; justify-content: space-between; text-align: left; color: #f4f7f8; font-size: var(--small); line-height: 4px; white-space: pre; }
.code { text-align: right; }
.code b { display: block; font-weight: bold; }
.btn { height: 9px; display: flex; align-items: center; gap: 3px; padding: 0 4px; border-radius: 5px; font: 3px/5px "DejaVu Sans", sans-serif; color: #34566a; }
.btn svg { width: 4px; height: 4px; color: var(--navy); }
.fill { background: var(--navy); color: #d6e4ec; font-weight: bold; }
.fill svg { color: #fff; }
.out { border: 1px solid #6b8797; background: #fafbfc; }
.btn:disabled { color: #b3b9bd; }
.fill:disabled { background: #c9cdd0; color: #a5abaf; }
.out:disabled { border-color: #d8dcdf; }

.fields { padding-top: 3px; padding-bottom: 5px; }
.text { display: block; width: 100%; height: 14px; margin-top: 4px; padding: 0 3px; border: 1px solid #7f909c; border-radius: 5px; background: #e4e8eb; font: 4px "Noto Sans", sans-serif; outline: 0; }
.text::placeholder { color: #7b858c; }
.text:disabled { border-color: #dfe2e5; background: #e5e8ea; }
.text:disabled::placeholder { color: #c9ced2; }

.btns { padding-top: 4px; padding-bottom: 4px; }
.btns div { display: flex; gap: 2px; }
.btns div + div { margin-top: 2px; }
.btns p { font: 4px/10px "Noto Sans", sans-serif; padding-left: 2px; }
.tight { padding: 0 3px; }

.pick { display: flex; justify-content: center; padding: 5px 0 6px; }
.datepicker { width: 124px; height: 87px; display: flex; border-radius: 5px; overflow: hidden; background: #fcfcfd; box-shadow: 0 1px 2px #0005; }
.side { width: 38px; padding: 4px; background: var(--navy); color: #dbe7ee; display: flex; flex-direction: column; }
.side span { font-size: var(--small); line-height: 5px; }
.side strong { font-size: 6px; line-height: 14px; font-weight: normal; white-space: nowrap; }
.side svg { margin-top: auto; width: 6px; height: 6px; }
.cal { flex: 1; padding: 3px 4px 2px 2px; display: flex; flex-direction: column; }
.calhead { display: flex; align-items: center; height: 9px; padding-left: 4px; font: 3px/5px "DejaVu Sans", sans-serif; color: #6a757d; }
.calhead button { margin-left: 6px; color: #33414b; }
.grid { display: grid; grid-template-columns: repeat(7, 1fr); margin-top: 15px; font: 3px/5px "DejaVu Sans", sans-serif; }
.grid span { height: 9px; display: grid; place-items: center; justify-self: center; width: 9px; }
.grid .wd { color: #8b949a; }
.grid .today { background: var(--navy); color: #fff; border-radius: 50%; }
.cal .actions { padding-right: 3px; }

.time { padding: 6px 0; }
.timepicker { width: 133px; height: 76px; border-radius: 5px; background: #fcfcfd; box-shadow: 0 1px 2px #0005; padding: 4px 6px 2px 7px; display: flex; flex-direction: column; }
.cap { font: 3px/4px "Noto Sans", sans-serif; height: 2px; }
.timemain { display: flex; justify-content: space-between; align-items: center; padding-right: 2px; }
.digits { width: 54px; }
.hm { display: flex; justify-content: space-between; align-items: center; font-size: 12px; line-height: 20px; height: 20px; }
.hm span { width: 24px; text-align: center; border-radius: 2px; background: #d9dbdd; color: #20292f; }
.hm .cur { background: #dbe3e8; color: #0f3b50; }
.hm i { font-style: normal; }
.ampm { display: flex; margin-top: 3px; height: 10px; border: 1px solid #cdd5da; border-radius: 3px; overflow: hidden; font-size: 4px; color: #7a858d; }
.ampm button { flex: 1; }
.ampm .cur { background: #d5dfe5; color: #49616f; }
.clock { width: 50px; height: 50px; }

.platform { padding-top: 4px; }
.platform .sub { margin-bottom: 4px; }
.win { width: 7px; height: 7px; color: var(--navy); margin-right: 2px; }
.platform .btn, .scheme .btn { margin-right: -2px; }
.blend .segrow { margin-top: 2px; }
.bottomnav .note { padding-top: 6px; }
.bnav { display: grid; grid-template-columns: repeat(3, 1fr); height: 18px; margin-bottom: 2px; border-bottom: 1px solid #e9ecee; color: #5e6a72; font-size: var(--small); line-height: 5px; }
.bnav button { display: flex; flex-direction: column; align-items: center; gap: 1px; padding-top: 3px; }
.bnav .cur { color: var(--navy); font-size: 4px; }
.cards { padding-bottom: 4px; }
.cards .note { padding: 4px 4px 1px; }
.cards .sheets { gap: 4px; }
.cards .sheets span { border-radius: 3px; }
</style>
